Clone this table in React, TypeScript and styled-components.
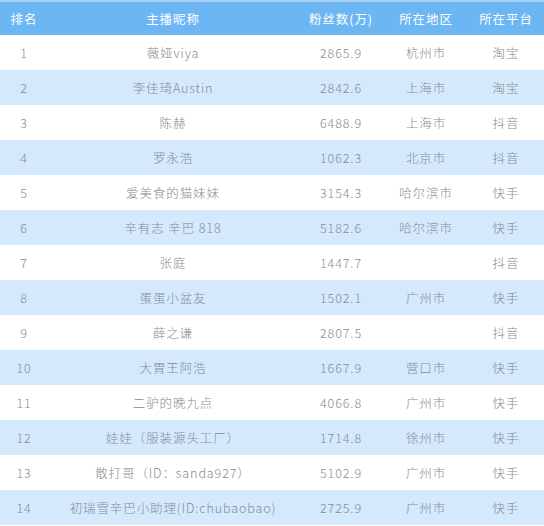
import React from "react";
import styled, { createGlobalStyle } from "styled-components";

const Global = createGlobalStyle`
  html, body { margin: 0; padding: 0; background: #ffffff; }
  body { font-family: "Microsoft YaHei", "Noto Sans CJK SC", "Noto Sans", sans-serif; }
`;

const Table = styled.div`
  width: 544px;
  border-top: 2px solid #a8d2f6;
  display: flex;
  flex-direction: column;
`;

const Row = styled.div<{ $kind: "head" | "odd" | "even" }>`
  display: grid;
  grid-template-columns: 48px 250px 86px 84px 1fr;
  height: ${(p) => (p.$kind === "head" ? 33 : 35)}px;
  align-items: center;
  background: ${(p) =>
    p.$kind === "head" ? "#6cb6f4" : p.$kind === "even" ? "#d4e9fc" : "#ffffff"};
  color: ${(p) => (p.$kind === "head" ? "#ffffff" : "#868b92")};
  font-size: 12.5px;
  font-weight: ${(p) => (p.$kind === "head" ? 400 : 300)};
  letter-spacing: 0.9px;
`;

const Cell = styled.div`
  text-align: center;
  white-space: nowrap;
  overflow: visible;
`;

const data: [string, string, string, string, string][] = [
  ["1", "薇娅viya", "2865.9", "杭州市", "淘宝"],
  ["2", "李佳琦Austin", "2842.6", "上海市", "淘宝"],
  ["3", "陈赫", "6488.9", "上海市", "抖音"],
  ["4", "罗永浩", "1062.3", "北京市", "抖音"],
  ["5", "爱美食的猫妹妹", "3154.3", "哈尔滨市", "快手"],
  ["6", "辛有志 辛巴 818", "5182.6", "哈尔滨市", "快手"],
  ["7", "张庭", "1447.7", "", "抖音"],
  ["8", "蛋蛋小盆友", "1502.1", "广州市", "快手"],
  ["9", "薛之谦", "2807.5", "", "抖音"],
  ["10", "大胃王阿浩", "1667.9", "营口市", "快手"],
  ["11", "二驴的晚九点", "4066.8", "广州市", "快手"],
  ["12", "娃娃（服装源头工厂）", "1714.8", "徐州市", "快手"],
  ["13", "散打哥（ID：sanda927）", "5102.9", "广州市", "快手"],
  ["14", "初瑞雪辛巴小助理(ID:chubaobao)", "2725.9", "广州市", "快手"],
];

export default function App() {
  return (
    <>
      <Global />
      <Table>
        <Row $kind="head">
          <Cell>排名</Cell>
          <Cell>主播昵称</Cell>
          <Cell>粉丝数(万)</Cell>
          <Cell>所在地区</Cell>
          <Cell>所在平台</Cell>
        </Row>
        {data.map((r, i) => (
          <Row key={r[0]} $kind={i % 2 === 0 ? "odd" : "even"}>
            {r.map((c, j) => (
              <Cell key={j}>{c}</Cell>
            ))}
          </Row>
        ))}
      </Table>
    </>
  );
}
